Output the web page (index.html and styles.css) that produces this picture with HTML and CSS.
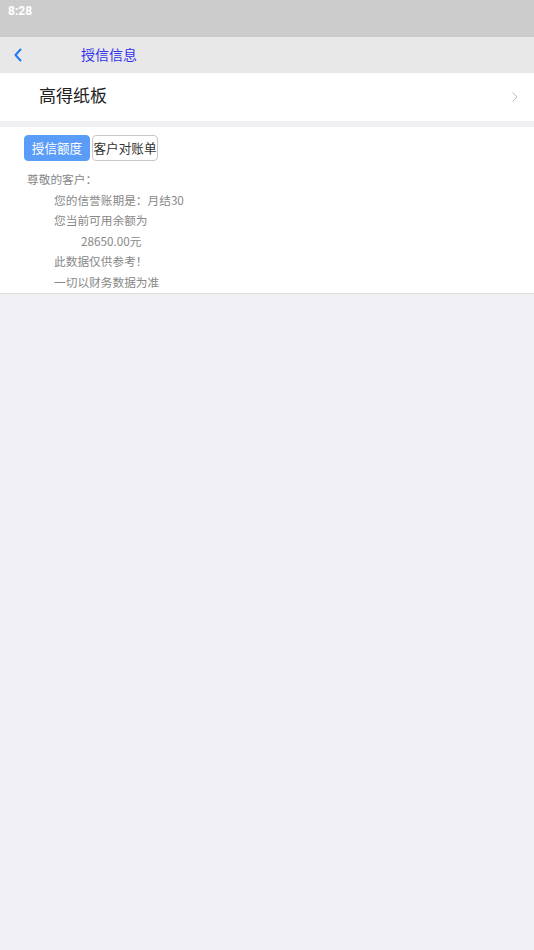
FILE: index.html
```html
<!DOCTYPE html>
<html lang="zh-CN">
<head>
    <meta charset="UTF-8">
    <meta name="viewport" content="width=device-width, initial-scale=1.0">
    <title>授信信息</title>
    <link rel="stylesheet" href="styles.css">
</head>
<body>
    <div class="status-bar">8:28</div>

    <div class="nav-bar">
        <a class="back" href="#">
            <svg width="10" height="14" viewBox="0 0 10 14">
                <path d="M7.5 1.5 L2.5 7 L7.5 12.5" fill="none" stroke="#1b7cf2" stroke-width="2" stroke-linecap="round" stroke-linejoin="round"/>
            </svg>
        </a>
        <span class="nav-title">授信信息</span>
    </div>

    <div class="company-row">
        <span class="company-name">高得纸板</span>
        <svg class="arrow" width="8" height="12" viewBox="0 0 8 12">
            <path d="M1.5 1.5 L6 6 L1.5 10.5" fill="none" stroke="#bbb" stroke-width="1"/>
        </svg>
    </div>

    <div class="credit-panel">
        <div class="tabs">
            <button class="tab active">授信额度</button>
            <button class="tab">客户对账单</button>
        </div>
        <div class="credit-text">
            <p>尊敬的客户：</p>
            <p class="indent">您的信誉账期是：月结30</p>
            <p class="indent">您当前可用余额为</p>
            <p class="indent2">28650.00元</p>
            <p class="indent">此数据仅供参考！</p>
            <p class="indent">一切以财务数据为准</p>
        </div>
    </div>
</body>
</html>
```

FILE: styles.css
```css
body {
    margin: 0;
    font-family: "Noto Sans CJK SC", "Noto Sans", sans-serif;
    background-color: #efeff4;
    min-height: 950px;
}
.status-bar {
    height: 37px;
    background-color: #cccccc;
    color: #fff;
    font-family: Roboto, "Noto Sans CJK SC", sans-serif;
    font-weight: bold;
    font-size: 12px;
    padding-left: 8px;
    line-height: 22px;
}
.nav-bar {
    height: 36px;
    background-color: #e8e8e8;
    display: flex;
    align-items: center;
}
.back {
    display: flex;
    align-items: center;
    padding-left: 13px;
    width: 68px;
    height: 100%;
}
.nav-title {
    color: #3333ee;
    font-size: 14px;
    padding-bottom: 3px;
}
.company-row {
    height: 48px;
    background-color: #fff;
    display: flex;
    align-items: center;
    justify-content: space-between;
    padding: 0 15px 0 39px;
    margin-bottom: 6px;
}
.company-name {
    font-size: 17px;
    color: #222;
    padding-bottom: 5px;
}
.credit-panel {
    background-color: #fff;
    border-bottom: 1px solid #dcdcdc;
    padding: 8px 0 0 24px;
}
.tabs {
    display: flex;
    gap: 2px;
}
.tab {
    width: 66px;
    height: 26px;
    padding: 0 0 2px;
    border: 1px solid #c8c8c8;
    border-radius: 4px;
    background-color: #fff;
    color: #333;
    font-family: inherit;
    font-size: 12.6px;
    white-space: nowrap;
}
.tab.active {
    background-color: #5a9cf8;
    border-color: #5a9cf8;
    color: #fff;
}
.credit-text {
    padding: 8px 0 0 3px;
    color: #888;
    font-size: 11.7px;
}
.credit-text p {
    margin: 0;
    line-height: 20.6px;
}
.indent {
    padding-left: 27px;
}
.indent2 {
    padding-left: 54px;
}
```
